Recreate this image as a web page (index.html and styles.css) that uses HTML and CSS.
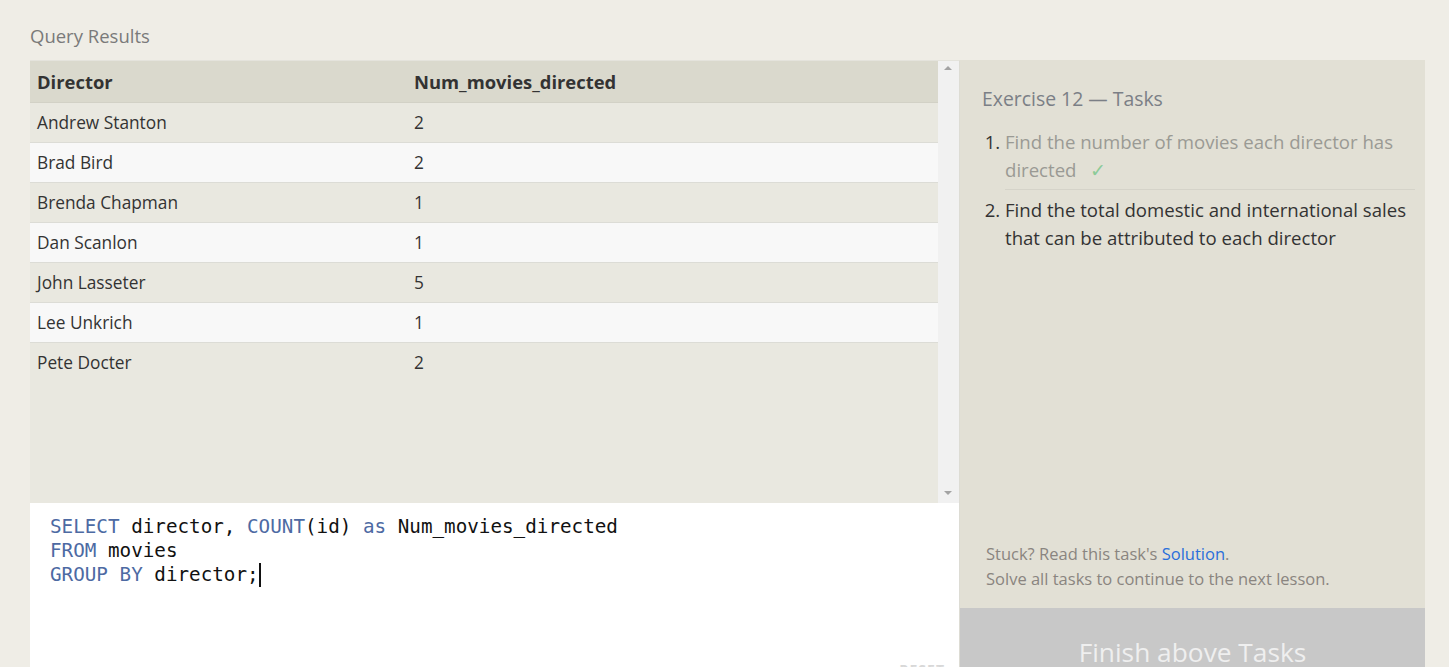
FILE: index.html
```html
<!DOCTYPE html>
<html>
<head>
<meta charset="utf-8">
<link rel="stylesheet" href="styles.css">
</head>
<body>
<main class="page">
  <h2 class="title">Query Results</h2>
  <div class="workspace">
    <section class="left">
      <div class="results">
        <div class="table-wrap">
          <table class="grid">
            <thead>
              <tr><th class="c1">Director</th><th>Num_movies_directed</th></tr>
            </thead>
            <tbody>
              <tr><td>Andrew Stanton</td><td>2</td></tr>
              <tr><td>Brad Bird</td><td>2</td></tr>
              <tr><td>Brenda Chapman</td><td>1</td></tr>
              <tr><td>Dan Scanlon</td><td>1</td></tr>
              <tr><td>John Lasseter</td><td>5</td></tr>
              <tr><td>Lee Unkrich</td><td>1</td></tr>
              <tr><td>Pete Docter</td><td>2</td></tr>
            </tbody>
          </table>
        </div>
        <div class="scrollbar">
          <span class="arrow up"></span>
          <span class="arrow down"></span>
        </div>
      </div>
      <div class="editor">
        <pre class="code"><span class="kw">SELECT</span> director, <span class="kw">COUNT</span>(id) <span class="kw">as</span> Num_movies_directed
<span class="kw">FROM</span> movies
<span class="kw">GROUP BY</span> director;<span class="cursor"></span></pre>
        <span class="reset">RESET</span>
      </div>
    </section>
    <aside class="right">
      <div class="tasks">
        <h3 class="tasks-title">Exercise 12 — Tasks</h3>
        <ol class="task-list">
          <li class="done">Find the number of movies each director has directed<span class="check">✓</span></li>
          <li>Find the total domestic and international sales that can be attributed to each director</li>
        </ol>
        <div class="hint">
          <p>Stuck? Read this task's <a class="link" href="#">Solution</a>.</p>
          <p>Solve all tasks to continue to the next lesson.</p>
        </div>
      </div>
      <div class="finish">Finish above Tasks</div>
    </aside>
  </div>
</main>
</body>
</html>
```
FILE: styles.css
```css
html, body {
  margin: 0;
  padding: 0;
  background: #efede6;
  height: 667px;
  overflow: hidden;
}
.page {
  font-family: "Open Sans", "Noto Sans", sans-serif;
  padding: 0 0 0 30px;
}
.title {
  margin: 0;
  padding-top: 23px;
  height: 60px;
  box-sizing: border-box;
  font-size: 18.5px;
  line-height: 26px;
  font-weight: 400;
  color: #7a7a7a;
}
.workspace {
  display: flex;
  width: 1395px;
}
.left {
  width: 930px;
  display: flex;
  flex-direction: column;
}
.results {
  height: 443px;
  display: flex;
  background: #e9e8e0;
  box-sizing: border-box;
  border-top: 1px solid #e4e3dc;
  border-right: 1px solid #dddcd4;
}
.table-wrap {
  flex: 1;
}
.grid {
  width: 908px;
  border-collapse: collapse;
  font-size: 17.3px;
  color: #333;
}
.grid th {
  background: #dad9cd;
  text-align: left;
  font-weight: 700;
  font-size: 18.4px;
  height: 41px;
  padding: 0 7px;
  color: #333;
  border-bottom: 1px solid #d2d1c6;
}
.grid th.c1 {
  width: 363px;
}
.grid td {
  height: 39px;
  padding: 0 7px;
  border-bottom: 1px solid #dcdcd6;
}
.grid tbody tr:nth-child(odd) td {
  background: #e9e8e0;
}
.grid tbody tr:nth-child(even) td {
  background: #f8f8f8;
}
.grid tbody tr:last-child td {
  border-bottom: none;
}
.scrollbar {
  width: 21px;
  background: #f1f1f1;
  position: relative;
}
.arrow {
  position: absolute;
  left: 6px;
  width: 0;
  height: 0;
  border-left: 4px solid transparent;
  border-right: 4px solid transparent;
}
.arrow.up {
  top: 5px;
  border-bottom: 4px solid #a3a3a3;
}
.arrow.down {
  bottom: 8px;
  border-top: 4px solid #a3a3a3;
}
.editor {
  height: 164px;
  background: #fff;
  position: relative;
  border-right: 1px solid #dddcd4;
  box-sizing: border-box;
}
.code {
  margin: 0;
  padding: 12px 0 0 20px;
  font-family: "DejaVu Sans Mono", "Liberation Mono", monospace;
  font-size: 19.25px;
  line-height: 24px;
  color: #111;
}
.kw {
  color: #4d6aa3;
}
.cursor {
  display: inline-block;
  width: 2px;
  height: 24px;
  background: #111;
  vertical-align: top;
}
.reset {
  position: absolute;
  right: 14px;
  bottom: -12px;
  font-size: 14px;
  letter-spacing: 1px;
  color: #d8d8d8;
  font-weight: 700;
}
.right {
  width: 465px;
  display: flex;
  flex-direction: column;
}
.tasks {
  height: 548px;
  background: #e2e0d5;
  box-sizing: border-box;
  padding: 24px 10px 0 22px;
  display: flex;
  flex-direction: column;
}
.tasks-title {
  margin: 0;
  font-size: 19.4px;
  line-height: 30px;
  font-weight: 400;
  color: #7b7f86;
}
.task-list {
  margin: 14px 0 0 0;
  padding: 0 0 0 23px;
  font-size: 18.6px;
  line-height: 28px;
  color: #333;
}
.task-list li {
  padding: 0 0 5px 0;
}
.task-list li.done {
  color: #9a9a94;
  border-bottom: 1px solid #d5d3c9;
  margin-bottom: 6px;
}
.task-list li.done::marker {
  color: #333;
}
.check {
  color: #8ccb98;
  margin-left: 14px;
}
.hint {
  margin-top: auto;
  padding: 0 0 17px 4px;
  font-size: 16.5px;
  line-height: 25px;
  color: #8a8580;
}
.hint p {
  margin: 0;
}
.link {
  color: #2a6fdb;
  text-decoration: none;
}
.finish {
  flex: 1;
  height: 80px;
  background: #c8c8c8;
  color: #efefef;
  font-size: 26.3px;
  text-align: center;
  padding-top: 26px;
  box-sizing: border-box;
  line-height: 36px;
}
```
